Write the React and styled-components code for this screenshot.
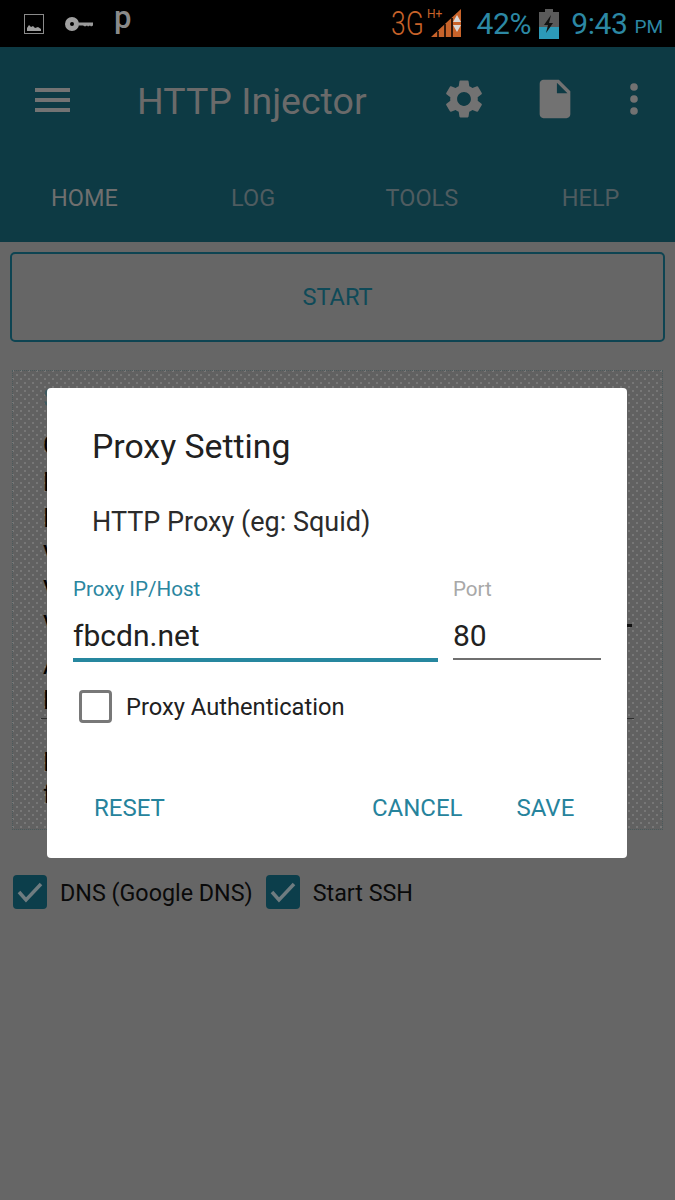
import React from 'react';
import styled, { createGlobalStyle } from 'styled-components';

const GlobalStyle = createGlobalStyle`
  html, body {
    margin: 0;
    padding: 0;
    background: #666666;
  }
  * {
    box-sizing: border-box;
  }
`;

const Screen = styled.div`
  position: relative;
  width: 675px;
  height: 1200px;
  overflow: hidden;
  background: #666666;
  font-family: Roboto, 'Noto Sans', sans-serif;
`;

const StatusBar = styled.div`
  height: 47px;
  background: #000;
  display: flex;
  align-items: center;
  justify-content: space-between;
  padding: 0 12px 0 24px;
`;

const StatusLeft = styled.div`
  display: flex;
  align-items: center;
  gap: 21px;
`;

const StatusRight = styled.div`
  display: flex;
  align-items: center;
`;

const Pee = styled.span`
  font-size: 31px;
  font-weight: 500;
  line-height: 36px;
  color: #8a8a8a;
  margin: 0 0 11px 0;
`;

const NetText = styled.span`
  display: inline-block;
  width: 34px;
  font-size: 33px;
  line-height: 36px;
  font-weight: 300;
  color: #c8632a;
  white-space: nowrap;
  transform: scaleX(0.8);
  transform-origin: left center;
`;

const NetSup = styled.span`
  font-size: 12px;
  line-height: 12px;
  color: #c8632a;
  margin: -20px -12px 0 2px;
`;

const Percent = styled.span`
  font-size: 30px;
  letter-spacing: -0.3px;
  color: #2c88a4;
  margin: 0 8px 0 14px;
`;

const Clock = styled.span`
  font-size: 30px;
  letter-spacing: -0.4px;
  color: #2c88a4;
  margin-left: 12px;
`;

const Meridiem = styled.span`
  font-size: 19px;
  color: #2c88a4;
  margin: 6px 0 0 7px;
`;

const AppBar = styled.header`
  height: 195px;
  background: #0d3a44;
`;

const TitleRow = styled.div`
  height: 110px;
  display: flex;
  align-items: center;
  padding: 0 0 0 35px;
`;

const Menu = styled.div`
  width: 35px;
  display: flex;
  flex-direction: column;
  gap: 6px;
  margin-bottom: 4px;

  span {
    height: 4px;
    background: #737373;
  }
`;

const Title = styled.h1`
  margin: 0 0 2px 67px;
  width: 304px;
  font-size: 37.5px;
  font-weight: 400;
  color: #6a6a6a;
  white-space: nowrap;
`;

const ToolIcons = styled.div`
  display: flex;
  align-items: center;
  color: #727272;
  margin-bottom: 6px;
`;

const Tabs = styled.nav`
  display: grid;
  grid-template-columns: repeat(4, 1fr);
`;

const Tab = styled.div`
  text-align: center;
  font-size: 23.5px;
  line-height: 30px;
  margin-top: 26px;
  color: ${({ $active }) => ($active ? '#6f6f6f' : '#4f5c60')};
`;

const Content = styled.main`
  padding: 10px 10px 0 10px;
`;

const StartButton = styled.div`
  height: 90px;
  border: 2px solid #0e4452;
  border-radius: 5px;
  display: flex;
  align-items: center;
  justify-content: center;
  font-size: 23.5px;
  color: #0f4a58;
`;

const Card = styled.section`
  margin: 28px 0 0 2px;
  width: 651px;
  height: 460px;
  border: 1px dotted #4b5a5c;
  padding: 12px 0 0 30px;
  background-color: #616161;
  background-image: radial-gradient(circle, #777 0.8px, transparent 1.1px),
    radial-gradient(circle, #777 0.8px, transparent 1.1px);
  background-size: 8px 8px;
  background-position: 0 0, 4px 4px;
`;

const HiddenRow = styled.div`
  height: 30px;
  margin-top: ${({ $gap }) => $gap}px;
  display: flex;
  align-items: center;
  padding-right: 30px;
  font-size: 26px;
  line-height: 30px;
  color: ${({ $muted }) => ($muted ? '#3d5a60' : '#000')};
`;

const RowLine = styled.span`
  flex: 1;
  height: 3px;
  margin-left: 8px;
  background: #111;
`;

const Rule = styled.div`
  height: 1px;
  margin: 3px 28px 0 -2px;
  background: #2e2e2e;
`;

const Options = styled.div`
  display: flex;
  align-items: center;
  margin: 45px 0 0 3px;
  font-size: 23.3px;
  color: #0a0a0a;
`;

const CheckedBox = styled.span`
  width: 34px;
  height: 34px;
  border-radius: 4px;
  background: #0c3e4b;
  display: flex;
  align-items: center;
  justify-content: center;
  color: #6f7c80;
`;

const OptionLabel = styled.span`
  margin: 2px 13px 0 13px;
`;

const Dialog = styled.div`
  position: absolute;
  left: 47px;
  top: 388px;
  width: 580px;
  height: 470px;
  background: #fff;
  border-radius: 4px;
  padding: 39px 26px 0 26px;
`;

const DialogTitle = styled.h2`
  margin: 0 0 0 19px;
  font-size: 33.8px;
  line-height: 40px;
  font-weight: 400;
  color: #212121;
`;

const Subtitle = styled.div`
  margin: 39px 0 0 19px;
  font-size: 27px;
  line-height: 32px;
  color: #2b2b2b;
`;

const Fields = styled.div`
  display: grid;
  grid-template-columns: 365px 148px;
  column-gap: 15px;
  margin-top: 38px;
`;

const FieldLabel = styled.label`
  display: block;
  font-size: 20.6px;
  line-height: 26px;
  color: ${({ $focus }) => ($focus ? '#2a86a0' : '#a8a8a8')};
`;

const FieldValue = styled.div`
  height: ${({ $focus }) => ($focus ? '54px' : '52px')};
  margin: 6px 0 ${({ $focus }) => ($focus ? '0' : '2px')};
  padding-top: 6px;
  font-size: 30px;
  line-height: 44px;
  color: #212121;
  border-bottom: ${({ $focus }) => ($focus ? '4px solid #26879f' : '2px solid #6f6f6f')};
`;

const AuthRow = styled.div`
  display: flex;
  align-items: center;
  margin: 28px 0 0 6px;
`;

const EmptyBox = styled.span`
  width: 33px;
  height: 33px;
  border: 3px solid #787878;
  border-radius: 4px;
`;

const AuthLabel = styled.span`
  margin-left: 14px;
  font-size: 23.7px;
  color: #212121;
`;

const Actions = styled.div`
  display: flex;
  align-items: center;
  margin: 70px 27px 0 21px;
`;

const Action = styled.span`
  font-size: 24px;
  line-height: 30px;
  color: #26839c;
  margin-left: ${({ $left }) => $left || 0}px;
`;

const ImageIcon = () => (
  <svg width="20" height="20" viewBox="0 0 20 20">
    <rect x="0.5" y="0.5" width="19" height="19" fill="none" stroke="#8a8a8a" />
    <path d="M3 17v-3l2-3 2 2 2-1 2 2 3-1 3 2v2z" fill="#a0a0a0" />
  </svg>
);

const KeyIcon = () => (
  <svg width="28" height="14" viewBox="0 0 28 14">
    <circle cx="7" cy="7" r="4.5" fill="none" stroke="#a0a0a0" strokeWidth="5" />
    <path d="M12 5.5h16v3l-2 1-1-1-2 1-1-1-2 1-2-1h-6z" fill="#9a9a9a" />
  </svg>
);

const SignalIcon = () => (
  <svg width="31" height="29" viewBox="0 0 31 29" style={{ marginLeft: 1 }}>
    <path d="M0 28 30 0v28z" fill="#c8632a" />
    <path d="M7 22v7M14 15v14M21 9v20" stroke="#000" strokeWidth="1.5" />
    <path d="M22 13l4-7 4 7zM22 16h8l-4 7z" fill="#d8d8d8" />
  </svg>
);

const BatteryIcon = () => (
  <svg width="20" height="30" viewBox="0 0 20 30">
    <path d="M6 0h8v3h6v27H0V3h6z" fill="#5a5a5a" />
    <path d="M0 18h20v12H0z" fill="#2c9ab8" />
    <path d="M12 6l-7 10h4l-2 8 7-10h-4z" fill="#111" />
  </svg>
);

const GearIcon = () => (
  <svg width="46" height="46" viewBox="0 0 24 24" fill="currentColor">
    <path d="M19.14 12.94c.04-.3.06-.61.06-.94 0-.32-.02-.64-.07-.94l2.03-1.58a.49.49 0 0 0 .12-.61l-1.92-3.32a.49.49 0 0 0-.59-.22l-2.39.96c-.5-.38-1.03-.7-1.62-.94l-.36-2.54a.48.48 0 0 0-.48-.41h-3.84c-.24 0-.43.17-.47.41l-.36 2.54c-.59.24-1.13.57-1.62.94l-2.39-.96c-.22-.08-.47 0-.59.22L2.74 8.87c-.12.21-.08.47.12.61l2.03 1.58c-.05.3-.09.63-.09.94s.02.64.07.94l-2.03 1.58a.49.49 0 0 0-.12.61l1.92 3.32c.12.22.37.29.59.22l2.39-.96c.5.38 1.03.7 1.62.94l.36 2.54c.05.24.24.41.48.41h3.84c.24 0 .44-.17.47-.41l.36-2.54c.59-.24 1.13-.56 1.62-.94l2.39.96c.22.08.47 0 .59-.22l1.92-3.32c.12-.22.07-.47-.12-.61l-2.01-1.58zM12 15.6c-1.98 0-3.6-1.62-3.6-3.6s1.62-3.6 3.6-3.6 3.6 1.62 3.6 3.6-1.62 3.6-3.6 3.6z" />
  </svg>
);

const DocIcon = () => (
  <svg width="46" height="46" viewBox="0 0 24 24" fill="currentColor" style={{ marginLeft: 45 }}>
    <path d="M6 2c-1.1 0-1.99.9-1.99 2L4 20c0 1.1.89 2 1.99 2H18c1.1 0 2-.9 2-2V8l-6-6H6zm7 7V3.5L18.5 9H13z" />
  </svg>
);

const MoreIcon = () => (
  <svg width="12" height="34" viewBox="0 0 12 34" fill="currentColor" style={{ marginLeft: 50 }}>
    <circle cx="6" cy="5" r="3.8" />
    <circle cx="6" cy="17" r="3.8" />
    <circle cx="6" cy="29" r="3.8" />
  </svg>
);

const Check = () => (
  <svg width="28" height="28" viewBox="0 0 28 28" fill="none" stroke="currentColor" strokeWidth="3.5">
    <path d="M3 14l7 8L25 6" />
  </svg>
);

const hiddenRows = [
  { text: 'S', gap: 0, muted: true },
  { text: 'C', gap: 17 },
  { text: 'D', gap: 7 },
  { text: 'I', gap: 6 },
  { text: 'V', gap: 7 },
  { text: 'V', gap: 5 },
  { text: 'V', gap: 5, line: true },
  { text: 'A', gap: 10 },
  { text: 'D', gap: 5, rule: true },
  { text: 'I', gap: 28 },
  { text: 'f', gap: 2 },
];

const App = () => {
  const tabs = ['HOME', 'LOG', 'TOOLS', 'HELP'];

  return (
    <Screen>
      <GlobalStyle />

      <StatusBar>
        <StatusLeft>
          <ImageIcon />
          <KeyIcon />
          <Pee>p</Pee>
        </StatusLeft>
        <StatusRight>
          <NetText>3G</NetText>
          <NetSup>H+</NetSup>
          <SignalIcon />
          <Percent>42%</Percent>
          <BatteryIcon />
          <Clock>9:43</Clock>
          <Meridiem>PM</Meridiem>
        </StatusRight>
      </StatusBar>

      <AppBar>
        <TitleRow>
          <Menu>
            <span />
            <span />
            <span />
          </Menu>
          <Title>HTTP Injector</Title>
          <ToolIcons>
            <GearIcon />
            <DocIcon />
            <MoreIcon />
          </ToolIcons>
        </TitleRow>
        <Tabs>
          {tabs.map((tab, i) => (
            <Tab key={tab} $active={i === 0}>
              {tab}
            </Tab>
          ))}
        </Tabs>
      </AppBar>

      <Content>
        <StartButton>START</StartButton>

        <Card>
          {hiddenRows.map((row, i) => (
            <React.Fragment key={i}>
              <HiddenRow $gap={row.gap} $muted={row.muted}>
                {row.text}
                {row.line && <RowLine />}
              </HiddenRow>
              {row.rule && <Rule />}
            </React.Fragment>
          ))}
        </Card>

        <Options>
          <CheckedBox>
            <Check />
          </CheckedBox>
          <OptionLabel>DNS (Google DNS)</OptionLabel>
          <CheckedBox>
            <Check />
          </CheckedBox>
          <OptionLabel>Start SSH</OptionLabel>
        </Options>
      </Content>

      <Dialog>
        <DialogTitle>Proxy Setting</DialogTitle>
        <Subtitle>HTTP Proxy (eg: Squid)</Subtitle>

        <Fields>
          <div>
            <FieldLabel $focus>Proxy IP/Host</FieldLabel>
            <FieldValue $focus>fbcdn.net</FieldValue>
          </div>
          <div>
            <FieldLabel>Port</FieldLabel>
            <FieldValue>80</FieldValue>
          </div>
        </Fields>

        <AuthRow>
          <EmptyBox />
          <AuthLabel>Proxy Authentication</AuthLabel>
        </AuthRow>

        <Actions>
          <Action>RESET</Action>
          <Action $left={207}>CANCEL</Action>
          <Action $left={54}>SAVE</Action>
        </Actions>
      </Dialog>
    </Screen>
  );
};

export default App;
